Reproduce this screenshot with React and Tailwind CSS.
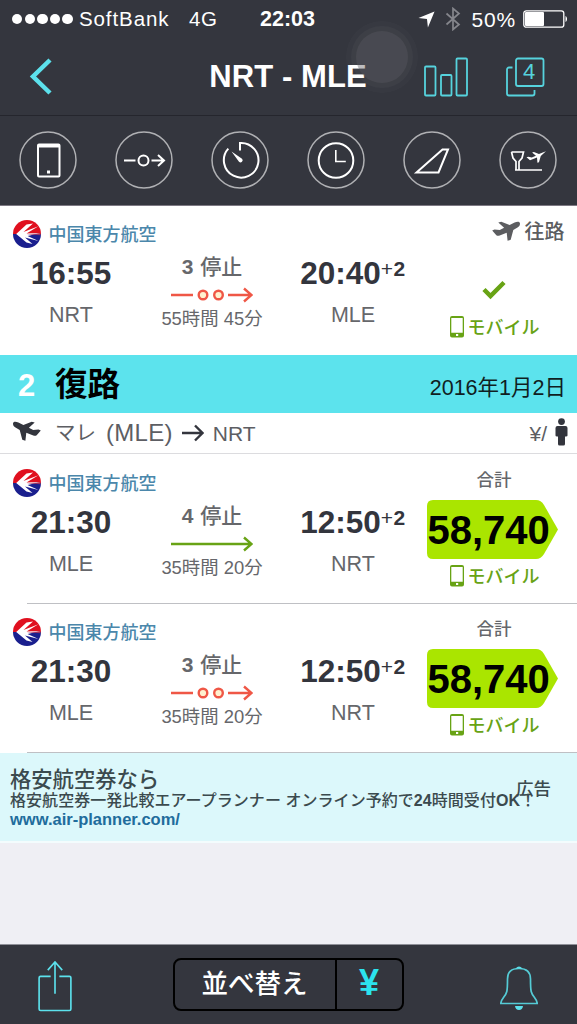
const FLIGHTS = [
	{ from: "MLE", to: "NRT", depart: "21:30", arrive: "12:50", stops: 4, duration: "35時間 20分", direct: true, price: "58,740" },
	{ from: "MLE", to: "NRT", depart: "21:30", arrive: "12:50", stops: 3, duration: "35時間 20分", direct: false, price: "58,740" },
];

const OUTBOUND = { from: "NRT", to: "MLE", depart: "16:55", arrive: "20:40", stops: 3, duration: "55時間 45分", direct: false };

function PlaneIcon({ className }) {
	return (
		<svg viewBox="0 0 28 20" className={className} fill="currentColor">
			<path d="M27.9 2C27.2.2 24.800.6 22.600 1.600L17.600 4 9.300.8 6.300 1.600l5.800 5.200-4.300 2.200L2.500 8.500.2 9.600l3.900 4.300c1 1 2.200 1 3.600.5l7-2.600.9 8 3.100-1 2.600-9.900 4.200-2.300c1.800-.9 2.800-2.700 2.400-4.600z" />
		</svg>
	);
}

function AirlineLogo() {
	return (
		<svg viewBox="0 0 28 28" className="size-7">
			<path d="M0 14a14 14 0 0 1 28 0z" fill="#e0101f" />
			<path d="M0 14a14 14 0 0 0 28 0z" fill="#1a1f8e" />
			<path d="M3.2 14 13.5 4.500 20 3.400 10.500 12 25.400 6.300 13.500 13.600 27.600 13 14.600 16 25.500 21 12 17.500 19.500 24 13.500 22.600z" fill="#fff" />
			<path d="M13.8 14.300 27.600 13.600V15.300z" fill="#9a3463" />
		</svg>
	);
}

function StatusBar() {
	return (
		<div className="flex h-[38px] items-center pl-3 pr-[9px]">
			<div className="flex w-[67px] gap-[2.2px]">
				{[0, 1, 2, 3, 4].map((i) => (
					<span key={i} className="size-[10.4px] rounded-full bg-white" />
				))}
			</div>
			<span className="w-[110px] text-[20.500px] tracking-[0.9px]">SoftBank</span>
			<span className="w-[71px] text-[20.500px] tracking-[0.5px]">4G</span>
			<span className="pt-px text-[21.500px] font-bold">22:03</span>
			<div className="ml-auto flex items-center">
				<svg viewBox="0 0 18 18" className="mr-[10px] size-[17px]">
					<path d="M17.500.5 10.500 17.500 9.500 8.500.5 7.500z" fill="#fff" />
				</svg>
				<svg viewBox="0 0 16 24" className="mr-[11px] h-6 w-4" fill="none" stroke="#85868c" strokeWidth="1.700">
					<path d="M1.500 6.500 14 17.500 8 22.500V1.500L14 6.500 1.500 17.500" />
				</svg>
				<span className="mr-[7px] text-[21px] tracking-[0.8px]">50%</span>
				<svg viewBox="0 0 45 18" className="h-[18px] w-[45px]">
					<rect x="0.8" y="0.8" width="40" height="16.400" rx="2.500" fill="none" stroke="#fff" strokeWidth="1.300" />
					<rect x="2" y="2" width="19" height="14" rx="1" fill="#fff" />
					<path d="M42.500 6c2 .8 2 5.200 0 6z" fill="#fff" />
				</svg>
			</div>
		</div>
	);
}

function NavBar() {
	return (
		<div className="grid h-[77px] grid-cols-[1fr_auto_1fr] items-center pl-[29px] pr-8">
			<svg viewBox="0 0 24 40" className="h-10 w-6" fill="none" stroke="#5ce1ec" strokeWidth="4.500">
				<path d="M21 3 4 19.500 21 36" />
			</svg>
			<h1 className="pl-[2px] text-[31px] font-bold tracking-[0.1px]">NRT - MLE</h1>
			<div className="flex items-center justify-end gap-[37px]">
				<svg viewBox="0 0 44 40" className="h-10 w-11" fill="none" stroke="#56d3dd" strokeWidth="1.800">
					<rect x="1" y="9.500" width="10.500" height="29" rx="1" />
					<rect x="17" y="18" width="10.500" height="20.500" rx="1" />
					<rect x="32.500" y="1.500" width="10.500" height="37" rx="1" />
				</svg>
				<div className="relative">
					<svg viewBox="0 0 40 40" className="size-10" fill="none" stroke="#56d3dd" strokeWidth="1.800">
						<rect x="11" y="1.500" width="27.500" height="27.500" rx="2" />
						<path d="M7.500 10.500H4a2 2 0 0 0-2 2V36.500a2 2 0 0 0 2 2H27.500a2 2 0 0 0 2-2V33" />
					</svg>
					<span className="absolute left-[18px] top-[3px] text-[22px] leading-6 text-[#56d3dd]">4</span>
				</div>
			</div>
		</div>
	);
}

// Each icon is drawn inside the same 58px round button
function FilterBar() {
	const icons = [
		<g key="device">
			<rect x="19" y="13.500" width="21.500" height="32" rx="1" />
			<path d="M19 15h21.500" strokeWidth="3" />
			<rect x="28" y="39.500" width="3" height="3" fill="#fff" stroke="none" />
		</g>,
		<g key="stops">
			<path d="M9 29.500h11.500M36.500 29.500h12M43 24l6 5.500-6 5.500" />
			<circle cx="28.500" cy="29.500" r="5" />
		</g>,
		<g key="duration">
			<path d="M17.300 17.700A17.300 17.300 0 1 0 29 12v7.500" />
			<path d="M20.500 20.500 31 27.800a2 2 0 0 1-3 3z" fill="#fff" stroke="none" />
		</g>,
		<g key="time">
			<circle cx="29" cy="29.500" r="17.300" />
			<path d="M28.800 19v11.500h10" strokeWidth="1.600" />
		</g>,
		<g key="airline">
			<path d="M13.500 41.500 39.500 18.500H45L35.500 41.500z" />
		</g>,
		<g key="airport">
			<path d="M12.500 21h12l-1.500 6-3 3.500v9M12.500 21l1.500 6 3 3.500v9M16 39h27" strokeWidth="1.700" />
			<g transform="translate(27.500 19.500) scale(.7)" fill="#fff" stroke="none">
				<path d="M27.800 1.200 17.800 5 10.500 2 8 3l5.500 4.600-6 2.500-5-1.200L0 9.800l5 4 10-3.800.6 7.600 2.200-.8 2.600-9z" />
			</g>
		</g>,
	];
	return (
		<div className="flex h-[89px] items-center justify-between border-t border-[#25262d] pl-[19px] pr-5">
			{icons.map((icon) => (
				<svg key={icon.key} viewBox="0 0 58 58" className="size-[58px]" fill="none" stroke="#fff" strokeWidth="2">
					<circle cx="29" cy="29" r="28" stroke="#b0b1b4" strokeWidth="1.500" />
					{icon}
				</svg>
			))}
		</div>
	);
}

function StopsArrow({ direct }) {
	return (
		<svg viewBox="0 0 82 20" className="h-5 w-[82px]" fill="none" stroke={direct ? "#68a315" : "#ef5746"} strokeWidth="2.400">
			{direct ? (
				<path d="M0 10h80M73 3.500l7.500 6.500L73 16.500" />
			) : (
				<>
					<path d="M0 10h22M57 10h23M73 3.500l7.500 6.500L73 16.500" />
					<circle cx="32" cy="10" r="4.300" fill="#fff1cf" />
					<circle cx="47.500" cy="10" r="4.300" fill="#fff1cf" />
				</>
			)}
		</svg>
	);
}

function MobileLabel() {
	return (
		<div className="flex h-[34px] items-center justify-center gap-[3px] text-[18px] font-medium text-[#68a315]">
			<svg viewBox="0 0 16 22" className="h-[22px] w-4">
				<path fillRule="evenodd" fill="currentColor" d="M3 0h10a2 2 0 0 1 2 2v17.500a2 2 0 0 1-2 2H3a2 2 0 0 1-2-2V2a2 2 0 0 1 2-2zM2.300 2v14.800h11.400V2zM7 18v2h2.200v-2z" />
			</svg>
			<span className="pt-[2px]">モバイル</span>
		</div>
	);
}

function Airport({ time, code, nextDay }) {
	return (
		<>
			<div className="flex h-11 items-center justify-center pt-px text-[31.500px] font-bold text-[#33353d]">
				<span>{time}</span>
				{nextDay && (
					<span className="mb-[11px] text-[21px] tracking-[0.5px]">
						<span className="font-normal">+</span>2
					</span>
				)}
			</div>
			<div className="flex h-10 items-center justify-center pt-px text-[21.500px] text-[#66676b]">{code}</div>
		</>
	);
}

function FlightRow({ flight }) {
	return (
		<div className="h-[149px] shrink-0 bg-white">
			<div className="flex h-[148px] pl-[0.5px]">
				<div className="w-[141px]">
					<div className="mt-[11px] flex h-[34px] items-center gap-2 whitespace-nowrap pl-3 text-[18px] font-medium text-[#4b87ab]">
						<span className="shrink-0">
							<AirlineLogo />
						</span>
						<span className="pt-px">中国東方航空</span>
					</div>
					<Airport time={flight.depart} code={flight.from} />
				</div>
				<div className="w-[141px] pt-[44px] text-[#66676b]">
					<div className="flex h-[34px] items-center justify-center whitespace-pre text-[21px] font-medium">
						<span className="mr-px pb-px text-[21px] font-bold">{flight.stops}</span>
						<span className="pb-[2px]"> 停止</span>
					</div>
					<div className="mt-px flex h-5 justify-center">
						<StopsArrow direct={flight.direct} />
					</div>
					<div className="flex h-7 items-center justify-center pt-px text-[18.400px]">{flight.duration}</div>
				</div>
				<div className="w-[141px] pt-[45px]">
					<Airport time={flight.arrive} code={flight.to} nextDay />
				</div>
				<div className="w-[141px]">
					{flight.price ? (
						<>
							<div className="mt-3 flex h-[26px] items-center justify-center pt-px text-[17.500px] font-medium text-[#66676b]">合計</div>
							<div className="relative ml-[3px] mt-[7px] flex h-[59px] w-[131px] items-center">
								<svg viewBox="0 0 131 59" className="absolute inset-0 size-full" fill="#aae500">
									<path d="M6 0H109q5 0 8 5L131 29.500 117 54q-3 5-8 5H6q-6 0-6-6V6q0-6 6-6z" />
								</svg>
								<span className="relative pl-px text-[40px] font-bold text-black">{flight.price}</span>
							</div>
						</>
					) : (
						<>
							<div className="mt-3 flex h-[26px] items-center justify-end gap-[5px] text-[20px] font-medium text-[#5c5d60]">
								<PlaneIcon className="h-5 w-7" />
								<span className="pt-[2px]">往路</span>
							</div>
							<div className="mt-[7px] flex h-[59px] justify-center pt-[29px]">
								<svg viewBox="0 0 24 20" className="h-5 w-6" fill="none" stroke="#68a315" strokeWidth="4.500">
									<path d="M2 9.500 8.500 16 22 2.500" />
								</svg>
							</div>
						</>
					)}
					<MobileLabel />
				</div>
			</div>
			{flight.price && <div className="ml-[27px] h-px bg-[#bfc0c4]" />}
		</div>
	);
}

function ReturnHeader() {
	return (
		<>
			<div className="flex h-[58px] items-center bg-[#5ce3ed] pl-[18px] pr-[11px]">
				<span className="w-[37px] pt-[2px] text-[31px] font-bold text-white">2</span>
				<span className="pt-[3px] text-[32.500px] font-bold text-black">復路</span>
				<span className="ml-auto pt-[10px] text-[21.500px] text-[#101e22]">2016年1月2日</span>
			</div>
			<div className="flex h-[41px] items-center border-b border-[#dcdcdf] bg-white pl-[13px] pr-[9px] text-[#5d5e63]">
				<PlaneIcon className="mb-1 h-5 w-7 -scale-x-100 text-[#33353d]" />
				<span className="ml-[14px] text-[20.500px]">マレ</span>
				<span className="ml-[10px] text-[24px] tracking-[0.3px]">(MLE)</span>
				<svg viewBox="0 0 22 18" className="ml-[9px] h-[18px] w-[22px]" fill="none" stroke="#33353d" strokeWidth="2.400">
					<path d="M0 9h20M13 1.500 20.500 9 13 16.500" />
				</svg>
				<span className="ml-[9px] text-[21px]">NRT</span>
				<span className="ml-auto text-[21px]">¥/</span>
				<svg viewBox="0 0 13 28" className="mb-[3px] ml-[8px] h-7 w-[13px]" fill="#33353d">
					<circle cx="6.500" cy="3.600" r="3.400" />
					<path d="M2.500 8h8q2 0 2 2v7.500q0 1-1.500 1H10V26q0 1.500-1.500 1.500h-4Q3 27.500 3 26v-7.500H2q-1.500 0-1.500-1V10q0-2 2-2z" />
				</svg>
			</div>
		</>
	);
}

function AdBanner() {
	return (
		<div className="relative h-[90px] border-b-2 border-[#f3fcfd] bg-[#dcf8fb] pl-[10px] pt-[15px] font-medium text-[#3b4a4e]">
			<div className="text-[21.300px] leading-6">格安航空券なら</div>
			<div className="whitespace-nowrap text-[16px] leading-[18px] tracking-[0.05px]">
				格安航空券一発比較エアープランナー オンライン予約で<b>24</b>時間受付<b>OK</b>！
			</div>
			<div className="text-[16.500px] font-bold leading-[18px] text-[#216c9c]">www.air-planner.com/</div>
			<span className="absolute right-[26px] top-[24px] text-[17.500px] leading-6">広告</span>
		</div>
	);
}

function Toolbar() {
	return (
		<div className="mt-auto flex h-20 items-center justify-between border-t border-[#8f9098] bg-[#34363e] pl-[37px] pr-[39px]">
			<svg viewBox="0 0 36 54" className="mt-[2px] h-[52px] w-9" fill="none" stroke="#5ce1ec" strokeWidth="1.700">
				<path d="M13.500 17H3q-1.500 0-1.500 1.500V51q0 1.500 1.500 1.500h30q1.500 0 1.500-1.500V18.500Q34.500 17 33 17H22.500M18 35V2M10.500 10.500 18 2l7.500 8.500" />
			</svg>
			<div className="ml-[3px] flex h-[53px] w-[231px] rounded-lg border-2 border-black">
				<div className="flex flex-1 items-center justify-center text-[26.500px] font-medium text-white">並べ替え</div>
				<div className="flex w-[67px] items-center justify-center border-l-2 border-black pb-1 text-[36px] font-bold text-[#2ce3ee]">
					<span>¥</span>
				</div>
			</div>
			<svg viewBox="0 0 38 46" className="mt-[7px] h-[46px] w-[38px]" fill="none" stroke="#55cbd5" strokeWidth="1.700">
				<path d="M7.500 14Q7.500 3.500 19 3.500T30.500 14c0 13 .5 14 4 18.500q2.700 3.500 2.700 6H.8q0-2.500 2.700-6c3.500-4.500 4-5.500 4-18.500z" />
				<path d="M15.500 3.500q3.500-4 7 0zM15 41h8q-.5 4-4 4t-4-4z" fill="#5ce1ec" stroke="none" />
			</svg>
		</div>
	);
}

export default function App() {
	return (
		<div className="flex h-[1024px] w-[577px] flex-col overflow-hidden bg-[#efeff4] font-['Liberation_Sans','Noto_Sans_CJK_JP',sans-serif] leading-none">
			<header className="relative h-[206px] shrink-0 border-b border-[#7d7983] bg-[#34363e] text-white">
				<StatusBar />
				<NavBar />
				<FilterBar />
				{/* AssistiveTouch button floating over the title */}
				<div className="absolute left-[346px] top-[21px] flex size-[72px] items-center justify-center rounded-full bg-white/[0.02]">
					<div className="flex size-[62px] items-center justify-center rounded-full bg-white/[0.03]">
						<div className="size-[52px] rounded-full bg-[#5b5a62]/40" />
					</div>
				</div>
			</header>
			<FlightRow flight={OUTBOUND} />
			<ReturnHeader />
			<div className="h-px shrink-0 bg-white" />
			{FLIGHTS.map((flight, i) => (
				<FlightRow key={i} flight={flight} />
			))}
			<AdBanner />
			<Toolbar />
		</div>
	);
}
